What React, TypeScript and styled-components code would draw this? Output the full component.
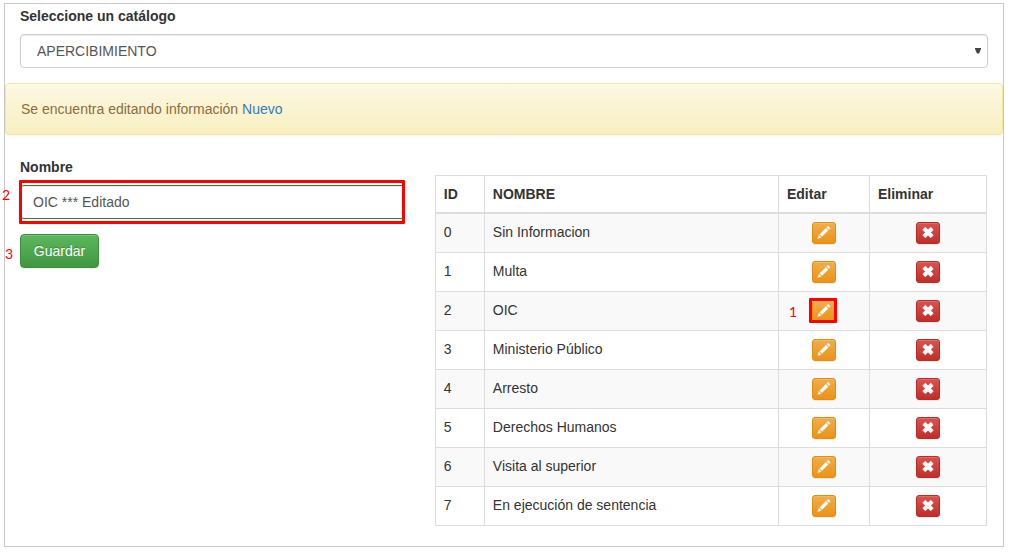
import React, { useState } from 'react';
import styled, { createGlobalStyle } from 'styled-components';

const GlobalStyle = createGlobalStyle`
  *, *::before, *::after { box-sizing: border-box; }
  body {
    margin: 0;
    background: #fff;
    color: #333;
    font: 14px/20px "Liberation Sans", Arial, sans-serif;
  }
  button, input, select { font: inherit; margin: 0; }
`;

const Panel = styled.main`
  margin: 3px 5px 8px 4px;
  padding-top: 2px;
  border: 1px solid #c8c8c8;
`;

const Section = styled.div`
  padding: 0 15px;
`;

const Label = styled.label`
  display: block;
  margin-bottom: 8px;
  font-weight: 700;
`;

const SelectBox = styled.div`
  position: relative;
`;

const Select = styled.select`
  display: block;
  width: 100%;
  height: 34px;
  padding: 6px 28px 6px 16px;
  appearance: none;
  color: #555;
  background: #fff;
  border: 1px solid #ccc;
  border-radius: 4px;
  box-shadow: inset 0 1px 1px rgba(0, 0, 0, 0.075);
`;

const Arrow = styled.svg`
  position: absolute;
  top: 14px;
  right: 7px;
  width: 6px;
  height: 6px;
  fill: #444;
  pointer-events: none;
`;

const Alert = styled.div`
  margin-top: 15px;
  padding: 15px;
  color: #8a6d3b;
  background: linear-gradient(to bottom, #fcf8e3 0%, #f8efc0 100%);
  border: 1px solid #f5e79e;
  border-radius: 4px;
  box-shadow: inset 0 1px 0 rgba(255, 255, 255, 0.25), 0 1px 2px rgba(0, 0, 0, 0.05);
  text-shadow: 0 1px 0 rgba(255, 255, 255, 0.2);
`;

const Link = styled.a`
  color: #337ab7;
  text-decoration: none;
`;

const Columns = styled.div`
  display: grid;
  grid-template-columns: minmax(0, 5fr) minmax(0, 7fr);
`;

const FormColumn = styled.form`
  padding: 22px 16px 20px 15px;
`;

const TableColumn = styled.section`
  padding: 40px 16px 20px 14px;
`;

const Field = styled.div`
  position: relative;
  margin-bottom: 15px;
`;

const Input = styled.input`
  display: block;
  width: 100%;
  height: 34px;
  padding: 6px 12px;
  color: #555;
  background: #fff;
  border: 1px solid #3c763d;
  border-radius: 4px;
  box-shadow: inset 0 1px 1px rgba(0, 0, 0, 0.075);
`;

const tones = {
  success: ['#5cb85c', '#419641', '#3e8f3e'],
  warning: ['#f0ad4e', '#eb9316', '#e38d13'],
  danger: ['#d9534f', '#c12e2a', '#b92c28'],
};

const Button = styled.button<{ $tone: keyof typeof tones; $small?: boolean }>`
  display: block;
  min-width: ${(p) => (p.$small ? 24 : 79)}px;
  padding: ${(p) => (p.$small ? '4px 5px' : '6px 12px')};
  color: #fff;
  background: linear-gradient(to bottom, ${(p) => tones[p.$tone][0]}, ${(p) => tones[p.$tone][1]});
  border: 1px solid ${(p) => tones[p.$tone][2]};
  border-radius: ${(p) => (p.$small ? 3 : 4)}px;
  box-shadow: inset 0 1px 0 rgba(255, 255, 255, 0.15), 0 1px 1px rgba(0, 0, 0, 0.075);
  text-shadow: 0 -1px 0 rgba(0, 0, 0, 0.2);
  cursor: pointer;

  svg {
    display: block;
    width: 12px;
    height: 12px;
    overflow: visible;
    fill: currentColor;
  }
`;

const Table = styled.table`
  width: 100%;
  table-layout: fixed;
  border-collapse: collapse;

  th, td {
    padding: 8px;
    border: 1px solid #ddd;
    text-align: left;
    vertical-align: top;
  }
  thead th { border-bottom-width: 2px; }
  tbody tr:nth-child(odd) { background: #f9f9f9; }
`;

const Col = styled.col<{ $width?: number }>`
  width: ${(p) => (p.$width ? `${p.$width}px` : 'auto')};
`;

const Action = styled.div`
  position: relative;
  width: 24px;
  height: 22px;
  margin: 0 auto;
`;

const Highlight = styled.span<{ $inset: string }>`
  position: absolute;
  inset: ${(p) => p.$inset};
  border: 3px solid #f00;
  border-radius: 1px;
  pointer-events: none;
`;

const Step = styled.span<{ $left: number; $top: number }>`
  position: absolute;
  top: ${(p) => p.$top}px;
  left: ${(p) => p.$left}px;
  color: #f00;
  font-family: Lato, "Open Sans", sans-serif;
`;

const SubmitRow = styled.div`
  position: relative;
`;

const Pencil = () => (
  <svg viewBox="0 0 1200 1200" aria-hidden="true">
    <path
      stroke="currentColor"
      strokeWidth="40"
      transform="matrix(1 0 0 -1 0 1140)"
      d="M1011 1210q19 0 33 -13l153 -153q13 -14 13 -33t-13 -33l-99 -92l-214 214l95 96q13 14 32 14zM1013 800l-615 -614l-214 214l614 614zM317 96l-333 -112l110 335z"
    />
  </svg>
);

const Remove = () => (
  <svg viewBox="0 0 12 12" aria-hidden="true">
    <path
      stroke="currentColor"
      strokeWidth=".5"
      d="M3.7 .5 6 2.8 8.3 .5q.4-.3.8 0l1.9 1.9q.3.4 0 .8L8.7 5.5 11 7.8q.3.4 0 .8L9.1 10.5q-.4.3-.8 0L6 8.2 3.7 10.5q-.4.3-.8 0L1 8.6q-.3-.4 0-.8l2.3-2.3L1 3.2q-.3-.4 0-.8L2.9 .5q.4-.3.8 0z"
    />
  </svg>
);

const records = [
  'Sin Informacion',
  'Multa',
  'OIC',
  'Ministerio Público',
  'Arresto',
  'Derechos Humanos',
  'Visita al superior',
  'En ejecución de sentencia',
];

export default function App() {
  const [name, setName] = useState('OIC *** Editado');

  return (
    <>
      <GlobalStyle />
      <Panel>
        <Section>
          <Label htmlFor="catalogo">Seleccione un catálogo</Label>
          <SelectBox>
            <Select id="catalogo">
              <option>APERCIBIMIENTO</option>
            </Select>
            <Arrow viewBox="0 0 6 6" aria-hidden="true">
              <path d="M0 0h6v1L4 5.500H2L0 1z" />
            </Arrow>
          </SelectBox>
        </Section>
        <Alert role="status">
          Se encuentra editando información <Link href="#nuevo">Nuevo</Link>
        </Alert>
        <Columns>
          <FormColumn onSubmit={(e) => e.preventDefault()}>
            <Label htmlFor="nombre">Nombre</Label>
            <Field>
              <Input id="nombre" value={name} onChange={(e) => setName(e.target.value)} />
              <Highlight $inset="-5px 0 -5px -1px" />
              <Step $left={-18} $top={0}>2</Step>
            </Field>
            <SubmitRow>
              <Button type="submit" $tone="success">Guardar</Button>
              <Step $left={-15} $top={10}>3</Step>
            </SubmitRow>
          </FormColumn>
          <TableColumn>
            <Table>
              <colgroup>
                <Col $width={49} />
                <Col />
                <Col $width={91} />
                <Col $width={117} />
              </colgroup>
              <thead>
                <tr>
                  <th scope="col">ID</th>
                  <th scope="col">NOMBRE</th>
                  <th scope="col">Editar</th>
                  <th scope="col">Eliminar</th>
                </tr>
              </thead>
              <tbody>
                {records.map((record, id) => (
                  <tr key={id}>
                    <td>{id}</td>
                    <td>{record}</td>
                    <td>
                      <Action>
                        <Button type="button" $tone="warning" $small aria-label={`Editar ${record}`}>
                          <Pencil />
                        </Button>
                        {id === 2 && (
                          <>
                            <Highlight $inset="-2px -1px -1px -3px" />
                            <Step $left={-23} $top={2}>1</Step>
                          </>
                        )}
                      </Action>
                    </td>
                    <td>
                      <Action>
                        <Button type="button" $tone="danger" $small aria-label={`Eliminar ${record}`}>
                          <Remove />
                        </Button>
                      </Action>
                    </td>
                  </tr>
                ))}
              </tbody>
            </Table>
          </TableColumn>
        </Columns>
      </Panel>
    </>
  );
}
